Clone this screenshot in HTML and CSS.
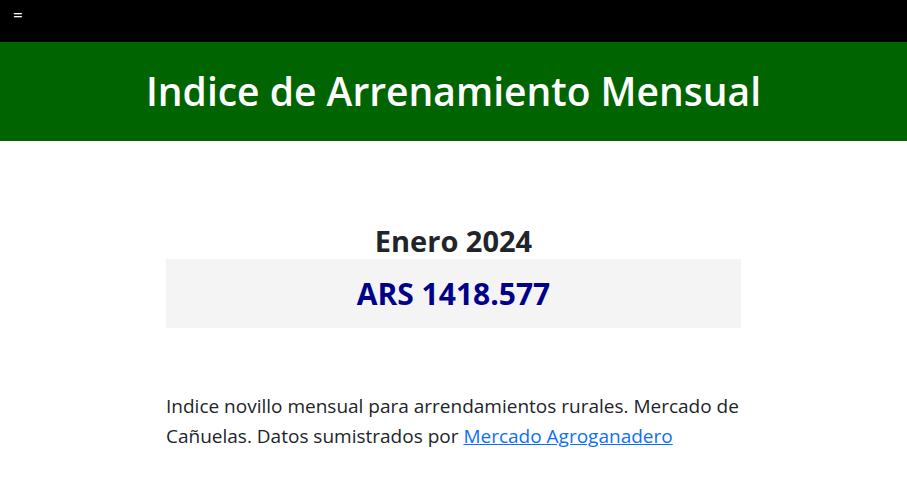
FILE: index.html
```html
<!DOCTYPE html>
<html lang="es">
<head>
<meta charset="utf-8">
<title>Indice de Arrenamiento Mensual</title>
<link rel="stylesheet" href="styles.css">
</head>
<body>
<nav class="topbar"><span class="menu">=</span></nav>
<header class="banner"><h1 class="title">Indice de Arrenamiento Mensual</h1></header>
<main class="content">
  <h2 class="period">Enero 2024</h2>
  <div class="value-box"><span class="value">ARS 1418.577</span></div>
  <p class="desc">Indice novillo mensual para arrendamientos rurales. Mercado de Cañuelas. Datos sumistrados por <a href="#" class="link">Mercado Agroganadero</a></p>
</main>
</body>
</html>
```
FILE: styles.css
```css
* { box-sizing: border-box; }
html, body { margin: 0; padding: 0; }
body {
  background: #fff;
  font-family: "Open Sans", "Noto Sans", sans-serif;
  color: #212529;
}
.topbar {
  height: 42px;
  background: #000;
  display: flex;
  align-items: flex-start;
  padding: 5px 0 0 13px;
}
.menu {
  color: #fff;
  font-size: 17px;
  line-height: 20px;
}
.banner {
  height: 99px;
  background: #006400;
  display: flex;
  align-items: center;
  justify-content: center;
}
.title {
  margin: 0;
  color: #fff;
  font-size: 39px;
  font-weight: 600;
  line-height: 1.2;
}
.content {
  width: 575px;
  margin: 0 auto;
  padding-top: 82px;
  display: flex;
  flex-direction: column;
}
.period {
  margin: 0;
  text-align: center;
  font-size: 29px;
  font-weight: 700;
  line-height: 36px;
}
.value-box {
  height: 69px;
  background: #f4f4f4;
  display: flex;
  align-items: center;
  justify-content: center;
}
.value {
  color: #00008b;
  font-size: 30px;
  font-weight: 700;
}
.desc {
  margin: 63px 0 0;
  font-size: 19px;
  line-height: 30px;
}
.link { color: #0d6efd; }
```
